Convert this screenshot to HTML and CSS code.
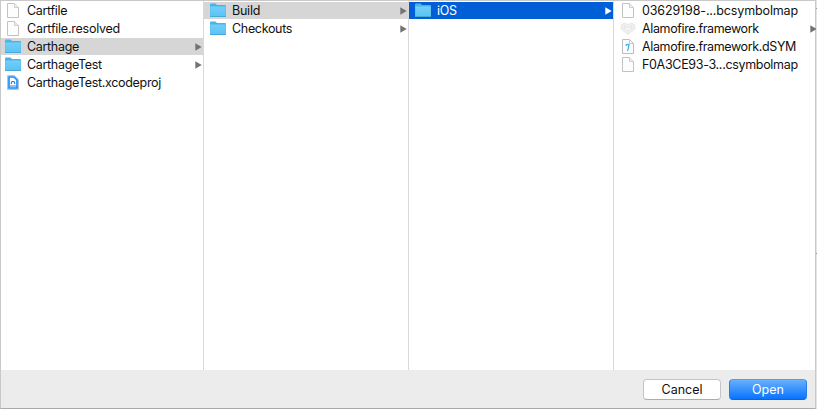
FILE: index.html
```
<!DOCTYPE html>
<html lang="en">
<head>
<meta charset="utf-8">
<title>Open</title>
<link rel="stylesheet" href="styles.css">
</head>
<body>
<svg class="defs" width="0" height="0" aria-hidden="true">
  <defs>
    <linearGradient id="blue" x1="0" y1="0" x2="0" y2="1"><stop offset="0" stop-color="#72cff8"/><stop offset="1" stop-color="#5cc3f5"/></linearGradient>
    <symbol id="doc" viewBox="0 0 16 17"><path d="M2.500 1.500H9.500L13.500 5.500V15.500H2.500Z" fill="#fdfdfd" stroke="#c2c2c2"/><path d="M9.500 1.500V5.500H13.500" fill="#f0f0f0" stroke="#cecece"/></symbol>
    <symbol id="folder" viewBox="0 0 16 17"><path d="M0 2.500Q0 1.500 1 1.500H5.500L7 3H15Q16 3 16 4V15H0Z" fill="#4db3e6"/><path d="M0.300 4.500H15.700V14H0.300Z" fill="url(#blue)"/><path d="M0 14.500H16" stroke="#48a8da"/></symbol>
    <symbol id="project" viewBox="0 0 16 17"><path d="M2.500 1.500H9.500L13.500 5.500V15.500H2.500Z" fill="#eef6ff" stroke="#b4c4d4"/><path d="M4 3H9L12 6V14H4Z" fill="#fff" stroke="#1687f5" stroke-width="1.600"/><path d="M5 12H11" stroke="#1687f5"/><path d="M6 10L7 7.500H9L10 10" fill="none" stroke="#1687f5" stroke-width="1.200"/></symbol>
    <symbol id="framework" viewBox="0 0 16 17"><path d="M1 5L4.500 3L8 4.500L11.500 3L15 5V9L8 14.500L1 9Z" fill="#efefef" stroke="#e6e6e6" stroke-width=".8"/><path d="M4 6L8 8L12 6L11 9L8 11L5 9Z" fill="#fafafa" stroke="#dedede" stroke-width=".7"/></symbol>
    <symbol id="dsym" viewBox="0 0 16 17"><path d="M2.500 1.500H9.500L13.500 5.500V15.500H2.500Z" fill="#fdfdfd" stroke="#bdbdbd"/><path d="M9.500 1.500V5.500H13.500" fill="none" stroke="#c8c8c8"/><path d="M5.500 7.500Q7 6 9.500 6.500M9 6.500Q8.500 10 7.500 13" fill="none" stroke="#36aef0" stroke-width="1.200"/></symbol>
    <symbol id="arrow" viewBox="0 0 7 8"><path d="M.3 .3L6.700 4L.3 7.700Z" fill="currentColor"/></symbol>
  </defs>
</svg>
<div class="dialog">
  <main class="browser">
    <ul class="column">
      <li class="row"><svg class="icon"><use href="#doc"/></svg><span class="name">Cartfile</span></li>
      <li class="row"><svg class="icon"><use href="#doc"/></svg><span class="name loose">Cartfile.resolved</span></li>
      <li class="row selected"><svg class="icon"><use href="#folder"/></svg><span class="name">Carthage</span><svg class="arrow"><use href="#arrow"/></svg></li>
      <li class="row"><svg class="icon"><use href="#folder"/></svg><span class="name">CarthageTest</span><svg class="arrow"><use href="#arrow"/></svg></li>
      <li class="row"><svg class="icon"><use href="#project"/></svg><span class="name">CarthageTest.xcodeproj</span></li>
    </ul>
    <ul class="column">
      <li class="row selected"><svg class="icon"><use href="#folder"/></svg><span class="name loose">Build</span><svg class="arrow"><use href="#arrow"/></svg></li>
      <li class="row"><svg class="icon"><use href="#folder"/></svg><span class="name">Checkouts</span><svg class="arrow"><use href="#arrow"/></svg></li>
    </ul>
    <ul class="column">
      <li class="row active"><svg class="icon"><use href="#folder"/></svg><span class="name">iOS</span><svg class="arrow"><use href="#arrow"/></svg></li>
    </ul>
    <ul class="column last">
      <li class="row"><svg class="icon"><use href="#doc"/></svg><span class="name digits">03629198-...bcsymbolmap</span></li>
      <li class="row"><svg class="icon"><use href="#framework"/></svg><span class="name tight">Alamofire.framework</span><svg class="arrow"><use href="#arrow"/></svg></li>
      <li class="row"><svg class="icon"><use href="#dsym"/></svg><span class="name tight">Alamofire.framework.dSYM</span></li>
      <li class="row"><svg class="icon"><use href="#doc"/></svg><span class="name">F0A3CE93-3...csymbolmap</span></li>
    </ul>
  </main>
  <footer class="actions">
    <button class="button">Cancel</button>
    <button class="button primary">Open</button>
  </footer>
</div>
<aside class="backdrop"><i class="rule"></i><i class="rule"></i></aside>
</body>
</html>
```
FILE: styles.css
```
* { box-sizing: border-box; }
body {
  margin: 0;
  width: 817px;
  height: 409px;
  display: flex;
  overflow: hidden;
  background: #fff;
  color: #111;
  font: 12.5px/17px Inter, "Liberation Sans", sans-serif;
}
.defs { position: absolute; }
.dialog {
  width: 816px;
  height: 409px;
  display: flex;
  flex-direction: column;
  border: 1px solid #c9c9c9;
  border-bottom-color: #aaa;
}
.browser {
  flex: 1;
  display: grid;
  grid-template-columns: 203px 205px 205px 1fr;
  background: #fff;
}
.column {
  min-width: 0;
  margin: 0;
  padding: 1px 0 0;
  list-style: none;
  border-right: 1px solid #d9d9d9;
}
.column.last { border-right: 0; }
.row {
  height: 17px;
  margin-bottom: 1px;
  padding: 0 1px 0 4px;
  display: flex;
  align-items: center;
}
.column + .column .row { padding-left: 6px; }
.column.last .row { padding-right: 0; }
.icon { width: 16px; height: 17px; flex: none; }
.name { flex: 1; margin-left: 6px; white-space: nowrap; letter-spacing: -.32px; }
.name.loose { letter-spacing: -.24px; }
.name.tight { letter-spacing: -.37px; }
.name.digits { letter-spacing: -.13px; }
.arrow { width: 7px; height: 8px; flex: none; color: #737373; }
.column.last .arrow { margin-right: -2px; }
.selected { background: #d6d6d6; }
.active { background: #005fd7; color: #fff; }
.active .arrow { color: #fff; }
.actions {
  height: 38px;
  padding: 9px 8px 0 0;
  display: flex;
  justify-content: flex-end;
  gap: 8px;
  background: #ececec;
}
.button {
  width: 78px;
  height: 21px;
  padding: 0;
  border: 1px solid #c5c5c5;
  border-bottom-color: #acacac;
  border-radius: 4px;
  background: #fff;
  color: #111;
  font: inherit;
}
.button.primary {
  border-color: #4aa0f8 #237ff0 #0866df;
  background: linear-gradient(#66b1fb, #0a72ff);
  color: #fff;
}
.backdrop {
  width: 1px;
  padding-top: 8px;
  display: flex;
  flex-direction: column;
  gap: 244px;
  background: #e5e5e5;
}
.rule { height: 1px; background: #999; }
```
